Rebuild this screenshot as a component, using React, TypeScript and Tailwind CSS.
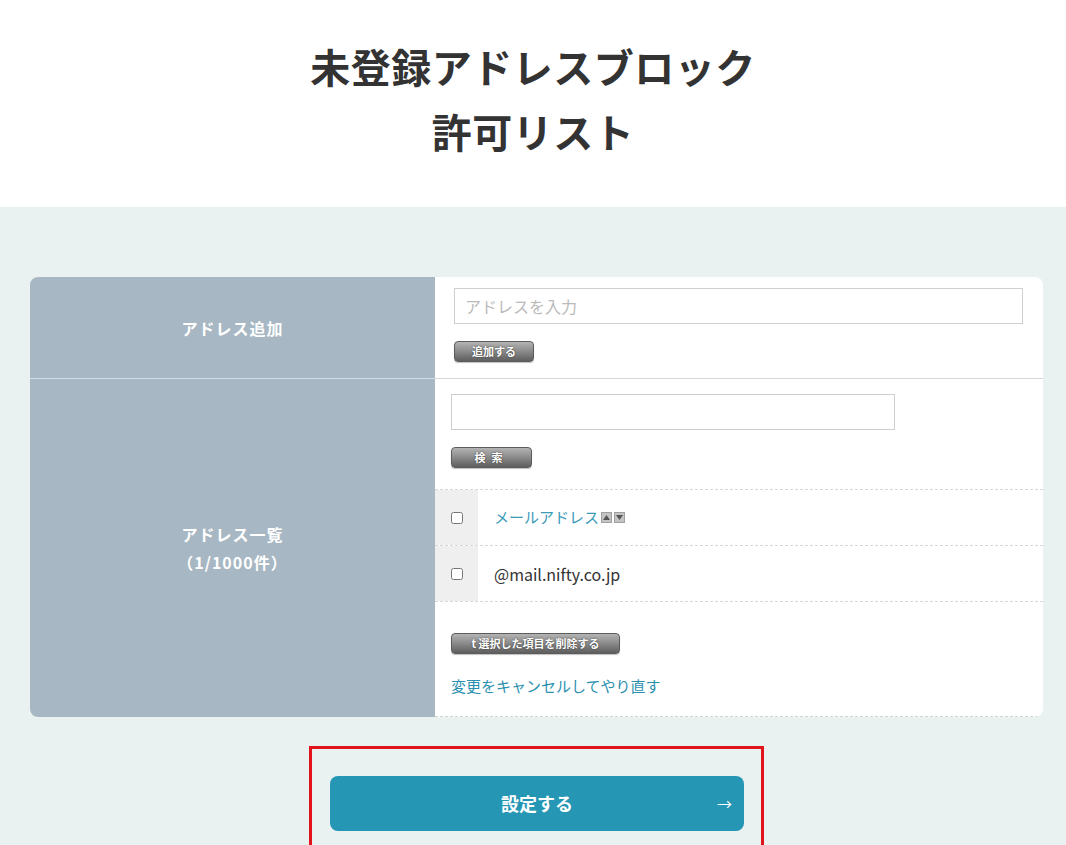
import React from "react";

const font = { fontFamily: '"Noto Sans CJK JP", "Noto Sans", sans-serif' };

function GreyButton({ children, className }: { children: React.ReactNode; className?: string }) {
  return (
    <button
      type="button"
      className={
        "h-[21px] rounded-[4px] border border-[#5c5c5c] bg-gradient-to-b from-[#b4b4b4] via-[#8a8a8a] to-[#5e5e5e] text-[11px] font-bold leading-none text-white shadow-[0_1px_1px_rgba(0,0,0,0.25)] [text-shadow:0_0_2px_rgba(0,0,0,0.6)] " +
        (className ?? "")
      }
    >
      {children}
    </button>
  );
}

function SortIcon({ up }: { up?: boolean }) {
  return (
    <span className="inline-flex h-[11px] w-[11px] items-center justify-center border border-[#a0a0a0] bg-[#c4c4c4]">
      <svg width="7" height="5" viewBox="0 0 7 5">
        {up ? <polygon points="3.5,0 7,5 0,5" fill="#555" /> : <polygon points="0,0 7,0 3.5,5" fill="#555" />}
      </svg>
    </span>
  );
}

export default function App() {
  return (
    <main className="min-h-screen bg-[#eaf1f1] text-[#333]" style={font}>
      <header className="bg-white pb-[43px] pt-[34px]">
        <h1 className="text-center text-[40px] font-bold leading-[65px] tracking-[0.5px] text-[#333]">
          未登録アドレスブロック
          <br />
          許可リスト
        </h1>
      </header>

      <section className="pb-[20px] pl-[30px] pr-[23px] pt-[70px]">
        <div className="grid grid-cols-[405px_1fr] overflow-hidden rounded-[8px] bg-white">
          {/* row 1 */}
          <div className="flex h-[101px] items-center justify-center bg-[#a7b7c3] text-[16px] font-bold tracking-[1px] text-white">
            アドレス追加
          </div>
          <div className="flex flex-col items-start pb-[16px] pl-[19px] pr-[20px] pt-[11px]">
            <input
              type="text"
              placeholder="アドレスを入力"
              className="h-[36px] w-full border border-[#cfcfcf] px-[10px] text-[16px] outline-none placeholder:text-[#bbb]"
            />
            <GreyButton className="mt-[17px] w-[80px]">追加する</GreyButton>
          </div>

          {/* row 2 */}
          <div className="flex flex-col items-center justify-center border-t border-[#d3dde3] bg-[#a7b7c3] text-[16px] font-bold leading-[28px] tracking-[1px] text-white">
            <span>アドレス一覧</span>
            <span>（1/1000件）</span>
          </div>
          <div className="flex flex-col border-t border-[#d6d6d6] border-b border-b-[#d6d6d6] [border-bottom-style:dashed]">
            <div className="flex flex-col items-start px-[16px] pt-[15px]">
              <input type="text" className="h-[36px] w-[444px] border border-[#cfcfcf] px-[10px] text-[15px] outline-none" />
              <GreyButton className="mt-[17px] w-[81px] tracking-[6px]">検索</GreyButton>
            </div>

            <div className="mt-[21px] border-t border-dashed border-[#d8d8d8]">
              <div className="flex h-[56px] border-b border-dashed border-[#d8d8d8]">
                <div className="flex w-[43px] items-center justify-center bg-[#efefef]">
                  <input type="checkbox" className="h-[12px] w-[12px]" />
                </div>
                <div className="flex items-center gap-[2px] pl-[16px] text-[15px] text-[#3a9ab8]">
                  <span>メールアドレス</span>
                  <SortIcon up />
                  <SortIcon />
                </div>
              </div>
              <div className="flex h-[56px] border-b border-dashed border-[#d8d8d8]">
                <div className="flex w-[43px] items-center justify-center bg-[#efefef]">
                  <input type="checkbox" className="h-[12px] w-[12px]" />
                </div>
                <div className="flex items-center pl-[16px] text-[16px] text-[#333]">@mail.nifty.co.jp</div>
              </div>
            </div>

            <div className="flex flex-col items-start px-[16px] pb-[18px] pt-[31px]">
              <GreyButton className="w-[169px]">t 選択した項目を削除する</GreyButton>
              <a href="#" className="mt-[20px] text-[15px] leading-[24px] text-[#2b8fb0]">
                変更をキャンセルしてやり直す
              </a>
            </div>
          </div>
        </div>

        <div className="mt-[29px] flex justify-center">
          <div className="border-[3px] border-[#e3131c] pb-[14px] pl-[18px] pr-[17px] pt-[27px]">
            <button
              type="button"
              className="relative flex h-[55px] w-[414px] items-center justify-center rounded-[8px] bg-[#2596b4] text-[18px] font-bold text-white"
            >
              設定する
              <span className="absolute right-[12px] top-1/2 -translate-y-1/2 text-[15px] font-normal">→</span>
            </button>
          </div>
        </div>
      </section>
    </main>
  );
}
